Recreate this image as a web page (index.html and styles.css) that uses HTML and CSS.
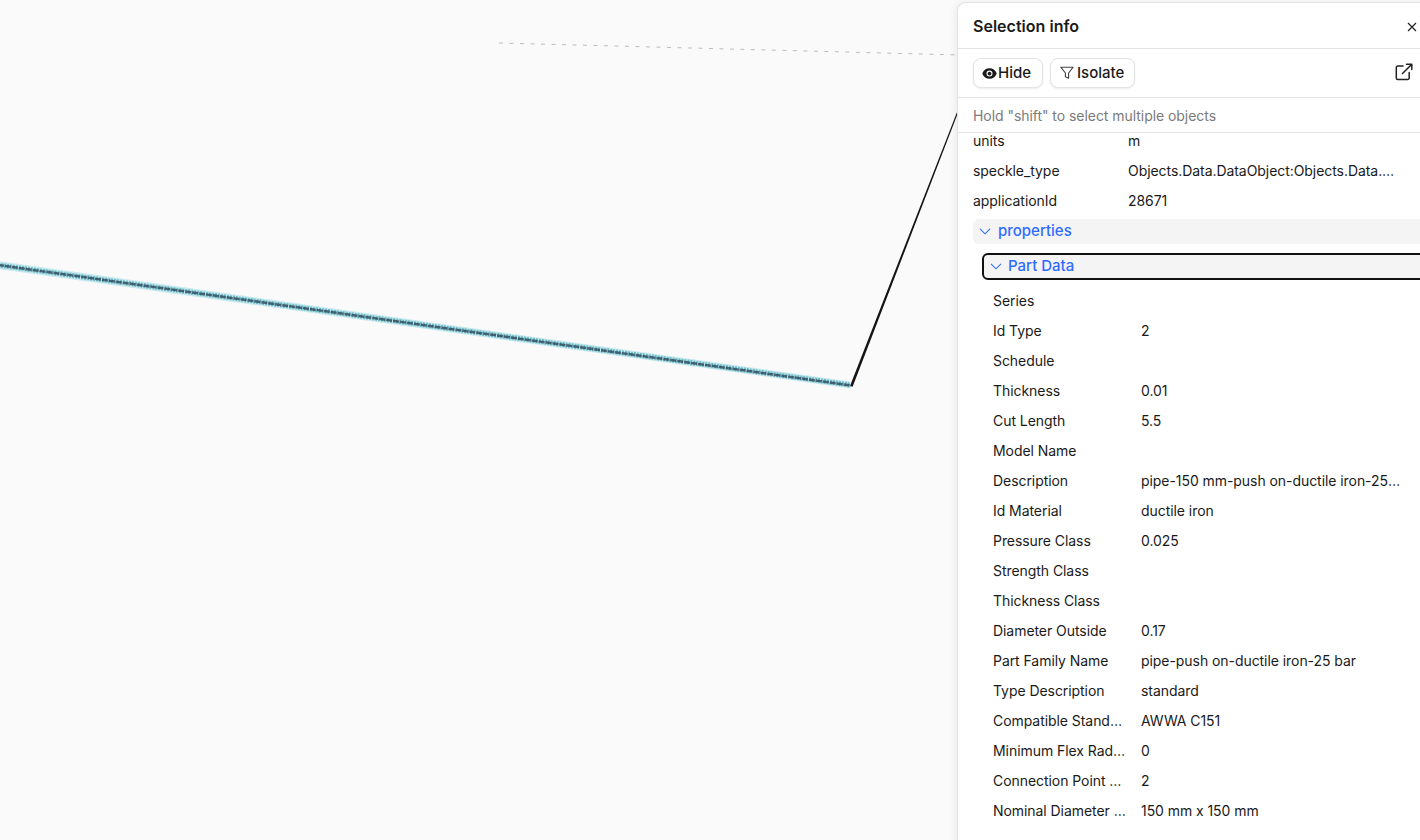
FILE: index.html
```html
<!DOCTYPE html>
<html lang="en">
<head>
<meta charset="utf-8">
<title>Selection info</title>
<link rel="stylesheet" href="styles.css">
</head>
<body>
<main class="viewer">
  <svg class="scene" width="1420" height="840" viewBox="0 0 1420 840">
    <line class="edge-dash" x1="499" y1="43" x2="960" y2="55"/>
    <polygon class="edge-solid" points="850,386 852.600,386.800 960.500,106.200 959.500,105.800"/>
    <polygon class="pipe-glow" points="-2,261 850,381.500 851,388.500 -2,269"/>
    <line class="pipe-shell" x1="-2" y1="265" x2="850" y2="385"/>
    <line class="pipe-core" x1="-2" y1="265" x2="851" y2="385.5"/>
  </svg>
  <aside class="panel">
    <header class="panel-head">
      <h2 class="panel-title">Selection info</h2>
      <svg class="close" width="10" height="10" viewBox="0 0 10 10"><path d="M1 1l8 8M9 1l-8 8"/></svg>
    </header>
    <div class="actions">
      <button class="btn btn-hide">
        <svg width="15" height="15" viewBox="0 0 20 20" fill="currentColor"><path d="M10 12.5a2.5 2.5 0 100-5 2.5 2.5 0 000 5z"/><path fill-rule="evenodd" d="M.66 10.59a1.65 1.65 0 010-1.19A10 10 0 0110 3a10 10 0 019.34 6.41c.15.38.15.8 0 1.19A10 10 0 0110 17a10 10 0 01-9.34-6.41zM14 10a4 4 0 11-8 0 4 4 0 018 0z" clip-rule="evenodd"/></svg>
        Hide
      </button>
      <button class="btn btn-isolate">
        <svg width="16" height="16" viewBox="0 0 16 16" fill="none" stroke="currentColor" stroke-width="1.1" stroke-linejoin="round"><path d="M1.8 2.200h12.400L9.600 8v5.300l-3.200-1.600V8z"/></svg>
        Isolate
      </button>
      <svg class="open" width="18" height="18" viewBox="0 0 18 18" fill="none" stroke="currentColor" stroke-width="1.5" stroke-linecap="round" stroke-linejoin="round"><path d="M8 3H2.800A1.500 1.500 0 001.300 4.500V15a1.500 1.500 0 001.500 1.500h9.900A1.500 1.500 0 0014.200 15V9.500M7.500 10.500L16.800 1.200M11.500 1.200h5.300v5.300"/></svg>
    </div>
    <p class="hint">Hold "shift" to select multiple objects</p>
    <div class="scroll">
      <div class="rows rows-top">
        <div class="row"><span class="key">units</span><span class="val">m</span></div>
        <div class="row"><span class="key">speckle_type</span><span class="val">Objects.Data.DataObject:Objects.Data.DataObject</span></div>
        <div class="row"><span class="key">applicationId</span><span class="val">28671</span></div>
      </div>
      <div class="group group-props">
        <svg class="chev" width="12" height="12" viewBox="0 0 12 12"><path d="M1 3.800l5 5 5-5"/></svg>
        <span>properties</span>
      </div>
      <div class="group group-part">
        <svg class="chev" width="12" height="12" viewBox="0 0 12 12"><path d="M1 3.800l5 5 5-5"/></svg>
        <span>Part Data</span>
      </div>
      <div class="rows rows-nested">
        <div class="row"><span class="key">Series</span><span class="val"></span></div>
        <div class="row"><span class="key">Id Type</span><span class="val">2</span></div>
        <div class="row"><span class="key">Schedule</span><span class="val"></span></div>
        <div class="row"><span class="key">Thickness</span><span class="val">0.01</span></div>
        <div class="row"><span class="key">Cut Length</span><span class="val">5.5</span></div>
        <div class="row"><span class="key">Model Name</span><span class="val"></span></div>
        <div class="row"><span class="key">Description</span><span class="val">pipe-150 mm-push on-ductile iron-25 bar</span></div>
        <div class="row"><span class="key">Id Material</span><span class="val">ductile iron</span></div>
        <div class="row"><span class="key">Pressure Class</span><span class="val">0.025</span></div>
        <div class="row"><span class="key">Strength Class</span><span class="val"></span></div>
        <div class="row"><span class="key">Thickness Class</span><span class="val"></span></div>
        <div class="row"><span class="key">Diameter Outside</span><span class="val">0.17</span></div>
        <div class="row"><span class="key">Part Family Name</span><span class="val">pipe-push on-ductile iron-25 bar</span></div>
        <div class="row"><span class="key">Type Description</span><span class="val">standard</span></div>
        <div class="row"><span class="key">Compatible Standards</span><span class="val">AWWA C151</span></div>
        <div class="row"><span class="key">Minimum Flex Radius</span><span class="val">0</span></div>
        <div class="row"><span class="key">Connection Point Count</span><span class="val">2</span></div>
        <div class="row"><span class="key">Nominal Diameter Size</span><span class="val">150 mm x 150 mm</span></div>
      </div>
    </div>
  </aside>
</main>
</body>
</html>
```
FILE: styles.css
```css
* { box-sizing: border-box; }
html, body { margin: 0; height: 100%; overflow: hidden; }
body { background: #fafafa; font-family: Inter, "Liberation Sans", sans-serif; color: #1a1a1a; }

.viewer { position: relative; width: 1420px; height: 840px; overflow: hidden; }
.scene { position: absolute; inset: 0; }
.edge-dash { stroke: #bdbdbd; stroke-width: 1; stroke-dasharray: 4 6.500; }
.edge-solid { fill: #141414; }
.pipe-glow { fill: #a6dde5; fill-opacity: .6; }
.pipe-shell { stroke: #6dbccb; stroke-width: 5; stroke-dasharray: 2 1; }
.pipe-core { stroke: #2f4658; stroke-width: 2.500; stroke-dasharray: 6 1; stroke-opacity: .8; }

.panel { position: absolute; left: 957px; top: 2px; width: 480px; height: 850px; background: #fff; border: 1px solid #e3e3e3; border-radius: 9px 0 0 0; box-shadow: -2px 0 6px rgba(0,0,0,.06); display: flex; flex-direction: column; }

.panel-head { height: 46px; flex: none; display: flex; align-items: center; padding: 0 0 0 15px; border-bottom: 1px solid #e3e3e3; position: relative; }
.panel-title { margin: 0; font-size: 16px; font-weight: 600; line-height: 24px; letter-spacing: .02px; }
.close { position: absolute; left: 449px; top: 19px; }
.close path { stroke: #222; stroke-width: 1.200; fill: none; }

.actions { height: 49px; flex: none; display: flex; align-items: center; gap: 7px; padding: 0 0 0 15px; border-bottom: 1px solid #e3e3e3; position: relative; }
.btn { height: 30px; display: flex; align-items: center; background: #fff; border: 1px solid #e3e3e3; border-radius: 8px; box-shadow: 0 1px 2px rgba(0,0,0,.08); font: 450 15px/20px Inter, "Liberation Sans", sans-serif; color: #1a1a1a; padding: 0; }
.btn-hide { width: 70px; padding-left: 8px; gap: 1px; }
.btn-isolate { width: 85px; padding-left: 8px; gap: 2px; }
.btn-isolate svg { color: #444; }
.open { position: absolute; left: 437px; top: 14px; color: #222; }

.hint { height: 35px; flex: none; margin: 0; padding: 0 0 0 15px; display: flex; align-items: center; border-bottom: 1px solid #e3e3e3; font-size: 14px; color: #7b7b7b; letter-spacing: -.05px; }

.scroll { flex: 1; overflow: hidden; min-height: 0; }
.rows { display: flex; flex-direction: column; }
.rows-top { margin-top: -7px; padding-left: 15px; }
.rows-nested { padding-left: 35px; margin-top: 6px; }
.row { height: 30px; flex: none; display: flex; align-items: center; font-size: 14px; line-height: 20px; letter-spacing: -.06px; }
.key { flex: none; font-weight: 430; overflow: hidden; white-space: nowrap; text-overflow: ellipsis; }
.val { flex: none; overflow: hidden; white-space: nowrap; text-overflow: ellipsis; }
.rows-top .key { width: 155px; }
.rows-top .val { width: 268px; }
.rows-nested .key { width: 135px; margin-right: 13px; }
.rows-nested .val { width: 262px; }

.group { display: flex; align-items: center; font-size: 15px; font-weight: 470; color: #2f6bff; background: #f4f4f4; border-radius: 6px; }
.group span { position: relative; top: -1px; }
.chev { position: relative; top: -1px; }
.chev path { fill: none; stroke: currentColor; stroke-width: 1.100; }
.group-props { height: 25px; margin: 3px 0 0 15px; padding-left: 6px; gap: 7px; }
.group-part { height: 27px; margin: 9px 0 0 24px; padding-left: 6px; gap: 6px; border: 2px solid #111; border-radius: 6px; }
```
